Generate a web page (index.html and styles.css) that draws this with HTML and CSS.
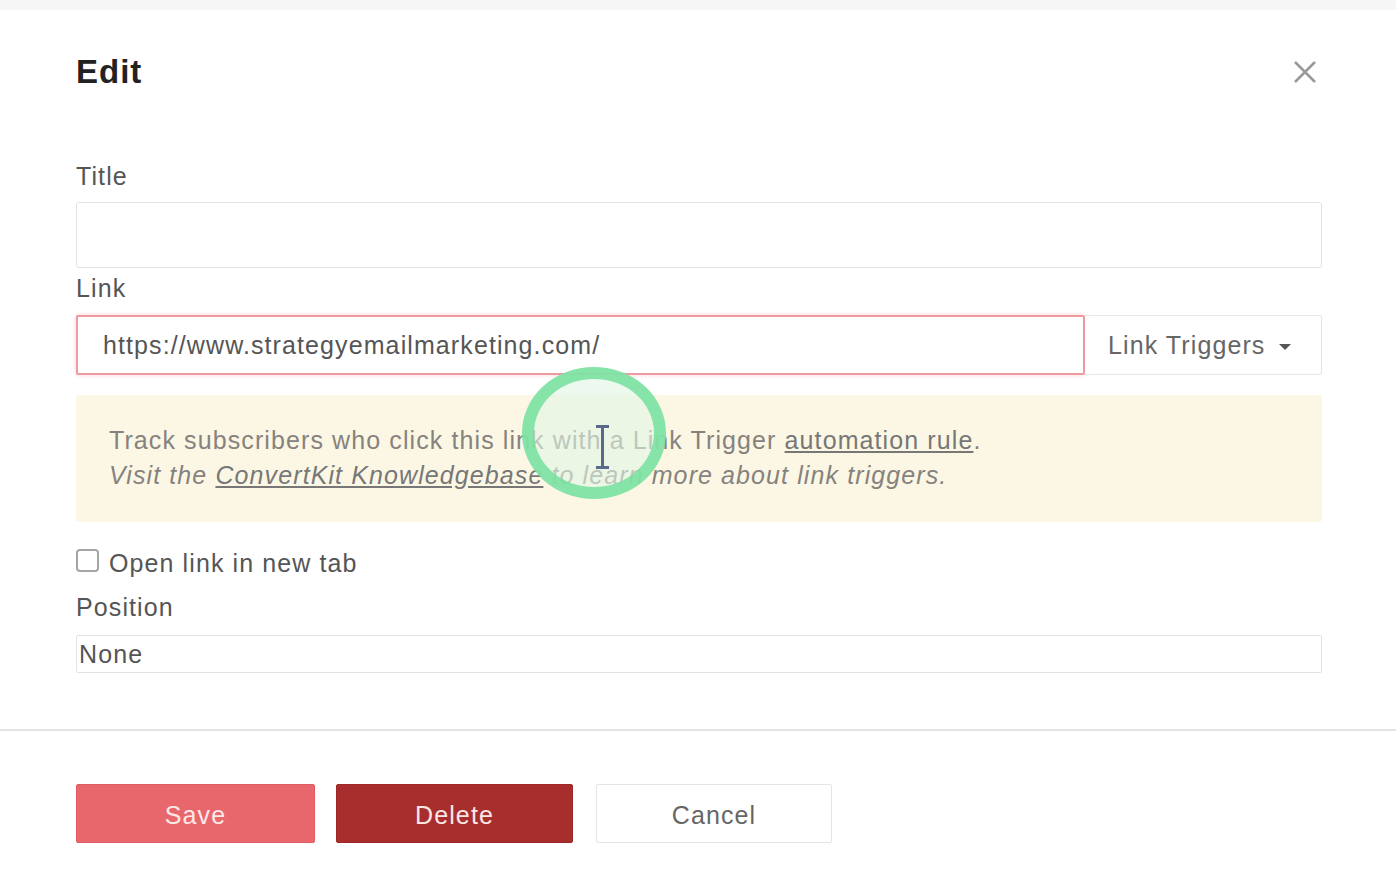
FILE: index.html
```
<!DOCTYPE html>
<html lang="en">
<head>
    <meta charset="UTF-8">
    <meta name="viewport" content="width=device-width, initial-scale=1.0">
    <title>Edit Link</title>
    <link rel="stylesheet" href="styles.css">
</head>
<body>

<div class="modal">
    <div class="modal-body">
        <div class="modal-header">
            <h2>Edit</h2>
            <button class="close" type="button" aria-label="Close">
                <svg width="24" height="24" viewBox="0 0 24 24"><path d="M2 2 L22 22 M22 2 L2 22" stroke="#9a9a9a" stroke-width="2.6" fill="none"/></svg>
            </button>
        </div>

        <label class="field-label title-label" for="title">Title</label>
        <input class="text-input title-input" type="text" id="title" name="title">

        <label class="field-label link-label" for="link">Link</label>
        <div class="link-group">
            <input class="text-input link-input" type="text" id="link" name="link" value="https://www.strategyemailmarketing.com/">
            <button class="triggers" type="button">Link Triggers <span class="caret"></span></button>
        </div>

        <div class="alert">
            <p>Track subscribers who click this link with a Link Trigger <a href="#">automation rule</a>.</p>
            <p class="note">Visit the <a href="#">ConvertKit Knowledgebase</a> to learn more about link triggers.</p>
            <!-- click highlight from the recording -->
            <div class="click-ring"></div>
            <div class="ibeam"></div>
        </div>

        <label class="check-row">
            <span class="checkbox"></span>
            Open link in new tab
        </label>

        <label class="field-label position-label" for="position">Position</label>
        <div class="select" id="position">None</div>
    </div>

    <div class="modal-footer">
        <button class="btn btn-save" type="button">Save</button>
        <button class="btn btn-delete" type="button">Delete</button>
        <button class="btn btn-cancel" type="button">Cancel</button>
    </div>
</div>

</body>
</html>
```

FILE: styles.css
```
body {
    margin: 0;
    padding: 0;
    background-color: #ffffff;
    font-family: "Liberation Sans", Arial, sans-serif;
    letter-spacing: 1.1px;
    color: #555;
}
.modal {
    width: 1396px;
    height: 896px;
    border-top: 10px solid #f6f6f6;
    box-sizing: border-box;
    background-color: #fff;
}
.modal-body {
    padding: 42px 74px 0 76px;
    height: 721px;
    box-sizing: border-box;
    border-bottom: 2px solid #e4e4e4;
}
.modal-header {
    display: flex;
    justify-content: space-between;
    align-items: center;
    height: 40px;
}
.modal-header h2 {
    margin: 0;
    font-size: 33px;
    line-height: 40px;
    letter-spacing: 1px;
    font-weight: bold;
    color: #222;
}
.close {
    border: none;
    background: none;
    padding: 0;
    margin-right: 5px;
    width: 24px;
    height: 24px;
    cursor: pointer;
}
.field-label {
    display: block;
    font-size: 25px;
    line-height: 30px;
    color: #555;
}
.title-label {
    margin-top: 69px;
}
.text-input {
    display: block;
    box-sizing: border-box;
    font-family: inherit;
    letter-spacing: 1.1px;
    font-size: 25px;
    color: #555;
    background: #fff;
    border: 1px solid #e2e2e2;
    border-radius: 3px;
    outline: none;
}
.title-input {
    width: 100%;
    height: 66px;
    margin-top: 11px;
}
.link-label {
    margin-top: 5px;
}
.link-group {
    display: flex;
    margin-top: 12px;
    height: 60px;
}
.link-input {
    width: 1009px;
    height: 60px;
    padding: 0 0 0 25px;
    border: 2px solid #ef9aa0;
    border-radius: 2px;
    box-shadow: 0 0 4px rgba(239, 120, 130, 0.35);
}
.triggers {
    flex: 1;
    display: flex;
    align-items: center;
    justify-content: flex-start;
    gap: 14px;
    padding: 0 0 0 23px;
    background: #fff;
    border: 1px solid #e6e6e6;
    border-left: none;
    border-radius: 0 3px 3px 0;
    font-family: inherit;
    font-size: 25px;
    letter-spacing: 1.1px;
    color: #666;
    cursor: pointer;
}
.caret {
    width: 0;
    height: 0;
    border-left: 6px solid transparent;
    border-right: 6px solid transparent;
    border-top: 6px solid #555;
    margin-top: 3px;
}
.alert {
    position: relative;
    margin-top: 20px;
    height: 127px;
    box-sizing: border-box;
    padding: 28px 33px 0 33px;
    background-color: #fbf7e4;
    border-radius: 3px;
    color: #86827e;
    font-size: 25px;
    line-height: 35px;
}
.alert p {
    margin: 0;
}
.alert a {
    color: #777;
    text-decoration: underline;
}
.note {
    font-style: italic;
}
.click-ring {
    position: absolute;
    left: 446px;
    top: -28px;
    width: 144px;
    height: 132px;
    box-sizing: border-box;
    border-radius: 50%;
    border: 12px solid rgba(118, 224, 158, 0.85);
    background-color: rgba(225, 245, 228, 0.6);
}
.ibeam {
    position: absolute;
    left: 525px;
    top: 30px;
    width: 3px;
    height: 44px;
    background-color: #5b6a8c;
}
.ibeam::before,
.ibeam::after {
    content: "";
    position: absolute;
    left: -5px;
    width: 13px;
    height: 3px;
    background-color: #5b6a8c;
}
.ibeam::before {
    top: 0;
}
.ibeam::after {
    bottom: 0;
}
.check-row {
    display: flex;
    align-items: center;
    gap: 10px;
    margin-top: 26px;
    font-size: 25px;
    line-height: 30px;
    color: #555;
}
.checkbox {
    width: 23px;
    height: 23px;
    box-sizing: border-box;
    border: 2px solid #a5a5a5;
    border-radius: 4px;
    margin-top: -6px;
}
.position-label {
    margin-top: 14px;
}
.select {
    margin-top: 13px;
    height: 38px;
    box-sizing: border-box;
    border: 1px solid #e2e2e2;
    border-radius: 2px;
    padding-left: 2px;
    font-size: 25px;
    line-height: 36px;
    color: #555;
}
.modal-footer {
    display: flex;
    gap: 21px;
    padding: 53px 76px 0 76px;
}
.btn {
    width: 239px;
    height: 59px;
    padding-top: 4px;
    border-radius: 2px;
    font-family: inherit;
    font-size: 25px;
    letter-spacing: 1.1px;
    cursor: pointer;
}
.btn-save {
    background-color: #e8676d;
    border: 1px solid #e05c62;
    color: #fde8e8;
}
.btn-delete {
    width: 237px;
    background-color: #a82e2e;
    border: 1px solid #9c2828;
    color: #fbe6e6;
}
.btn-cancel {
    width: 236px;
    margin-left: 2px;
    background-color: #fff;
    border: 1px solid #e4e4e4;
    color: #666;
}
```
